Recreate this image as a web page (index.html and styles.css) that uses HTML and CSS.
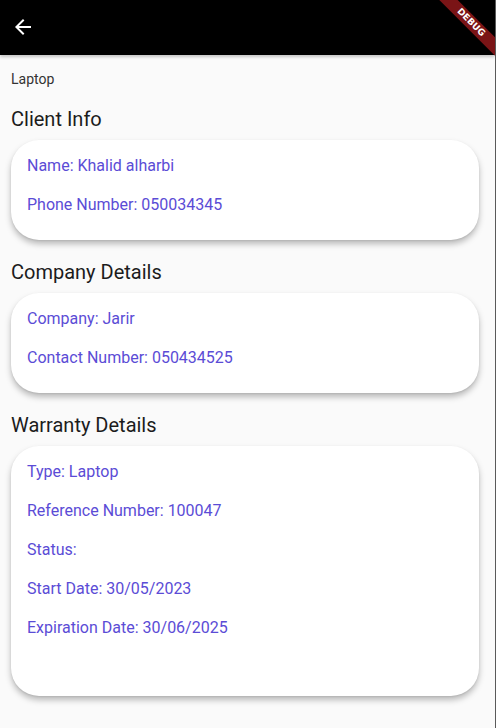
FILE: index.html
```html
<!DOCTYPE html>
<html>
<head>
<meta charset="utf-8">
<link rel="stylesheet" href="styles.css">
</head>
<body>
<div class="screen">
  <header class="appbar">
    <svg class="back" viewBox="0 0 24 24" width="24" height="24"><path fill="#fff" d="M20 11H7.83l5.59-5.59L12 4l-8 8 8 8 1.41-1.41L7.83 13H20v-2z"/></svg>
  </header>
  <div class="debug"><span>DEBUG</span></div>
  <main class="content">
    <p class="subtitle">Laptop</p>
    <h2 class="title">Client Info</h2>
    <div class="card">
      <div class="row">Name: Khalid alharbi</div>
      <div class="row">Phone Number: 050034345</div>
    </div>
    <h2 class="title">Company Details</h2>
    <div class="card">
      <div class="row">Company: Jarir</div>
      <div class="row">Contact Number: 050434525</div>
    </div>
    <h2 class="title">Warranty Details</h2>
    <div class="card card-tall">
      <div class="row">Type: Laptop</div>
      <div class="row">Reference Number: 100047</div>
      <div class="row">Status: </div>
      <div class="row">Start Date: 30/05/2023</div>
      <div class="row">Expiration Date: 30/06/2025</div>
    </div>
  </main>
</div>
</body>
</html>
```
FILE: styles.css
```css
* { box-sizing: border-box; }
html, body { margin: 0; padding: 0; }
body {
  width: 496px;
  height: 728px;
  overflow: hidden;
  background: #fafafa;
  font-family: Roboto, "Noto Sans", sans-serif;
}
.screen {
  position: relative;
  width: 496px;
  height: 728px;
  border-right: 1px solid #5a5a5a;
  background: #fafafa;
  overflow: hidden;
}
.appbar {
  height: 55px;
  background: #000;
  display: flex;
  align-items: center;
  padding-left: 11px;
  box-shadow: 0 2px 3px rgba(0,0,0,0.22);
  position: relative;
  z-index: 1;
}
.back { display: block; margin-top: -1px; }
.debug {
  position: absolute;
  z-index: 2;
  width: 130px;
  height: 13px;
  left: 406px;
  top: 15.5px;
  background: #7a1416;
  transform: rotate(45deg);
  display: flex;
  align-items: center;
  justify-content: center;
}
.debug span {
  color: #fff;
  font-family: "DejaVu Sans", sans-serif;
  font-weight: bold;
  font-size: 9px;
  letter-spacing: 0;
  line-height: 13px;
}
.content {
  padding: 16px 16px 0 11px;
}
.subtitle {
  margin: 0;
  font-size: 14px;
  line-height: 16px;
  color: #333;
}
.title {
  margin: 20px 0 9px;
  font-size: 20px;
  line-height: 24px;
  font-weight: 400;
  color: #1c1c1c;
}
.card {
  background: #fff;
  border-radius: 28px;
  padding: 16px 16px 6px;
  box-shadow: 0 4px 6px rgba(0,0,0,0.26), 0 1px 2px rgba(0,0,0,0.08);
}
.card-tall { padding-bottom: 39px; }
.row {
  font-size: 16px;
  line-height: 19px;
  margin-bottom: 20px;
  color: #5b4cd6;
  min-height: 19px;
}
```
